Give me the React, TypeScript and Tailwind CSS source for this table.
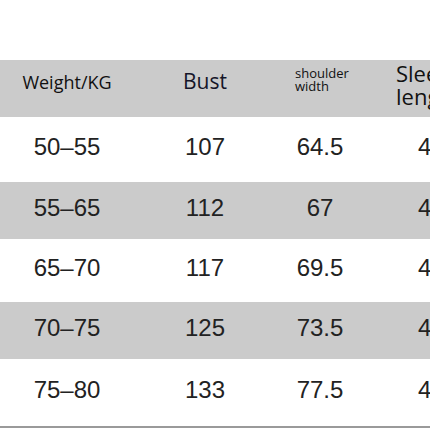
const rows = [
  { w: "50–55", b: "107", s: "64.5", l: "4", gray: false, h: "h-[65px]" },
  { w: "55–65", b: "112", s: "67", l: "4", gray: true, h: "h-[57px]" },
  { w: "65–70", b: "117", s: "69.5", l: "4", gray: false, h: "h-[63px]" },
  { w: "70–75", b: "125", s: "73.5", l: "4", gray: true, h: "h-[57px]" },
  { w: "75–80", b: "133", s: "77.5", l: "4", gray: false, h: "h-[67px]" },
];

const App = () => {
  return (
    <div className="w-[430px] h-[430px] bg-white overflow-hidden">
      <div className="h-[60px]" />

      {/* Header */}
      <div className="flex h-[57px] bg-[#cbcbcb] font-['Open_Sans',sans-serif] text-[#111]">
        <div className="w-[134px] shrink-0 flex items-start justify-center pt-[9px] text-[18px]">
          Weight/KG
        </div>
        <div className="w-[142px] shrink-0 flex items-start justify-center pt-[6px] text-[21px] text-[#151528]">
          Bust
        </div>
        <div className="w-[88px] shrink-0 flex flex-col items-start pl-[19px] pt-[7px] text-[13px] leading-[13px]">
          <span>shoulder</span>
          <span>width</span>
        </div>
        <div className="w-[90px] shrink-0 flex flex-col items-start pl-[32px] pt-[2px] text-[22px] leading-[23px] whitespace-nowrap">
          <span>Sleeve</span>
          <span>length</span>
        </div>
      </div>

      {/* Rows */}
      {rows.map((r) => (
        <div
          key={r.w}
          className={`flex items-center ${r.h} ${r.gray ? "bg-[#cbcbcb]" : "bg-white"} font-['Liberation_Sans',Arial,sans-serif] text-[24px] text-[#222] pb-[6px]`}
        >
          <div className="w-[134px] shrink-0 text-center">{r.w}</div>
          <div className="w-[142px] shrink-0 text-center">{r.b}</div>
          <div className="w-[88px] shrink-0 text-center">{r.s}</div>
          <div className="w-[90px] shrink-0 pl-[54px] whitespace-nowrap">{r.l}</div>
        </div>
      ))}

      <div className="h-[2px] bg-[#9a9a9a]" />
    </div>
  );
};

export default App;
